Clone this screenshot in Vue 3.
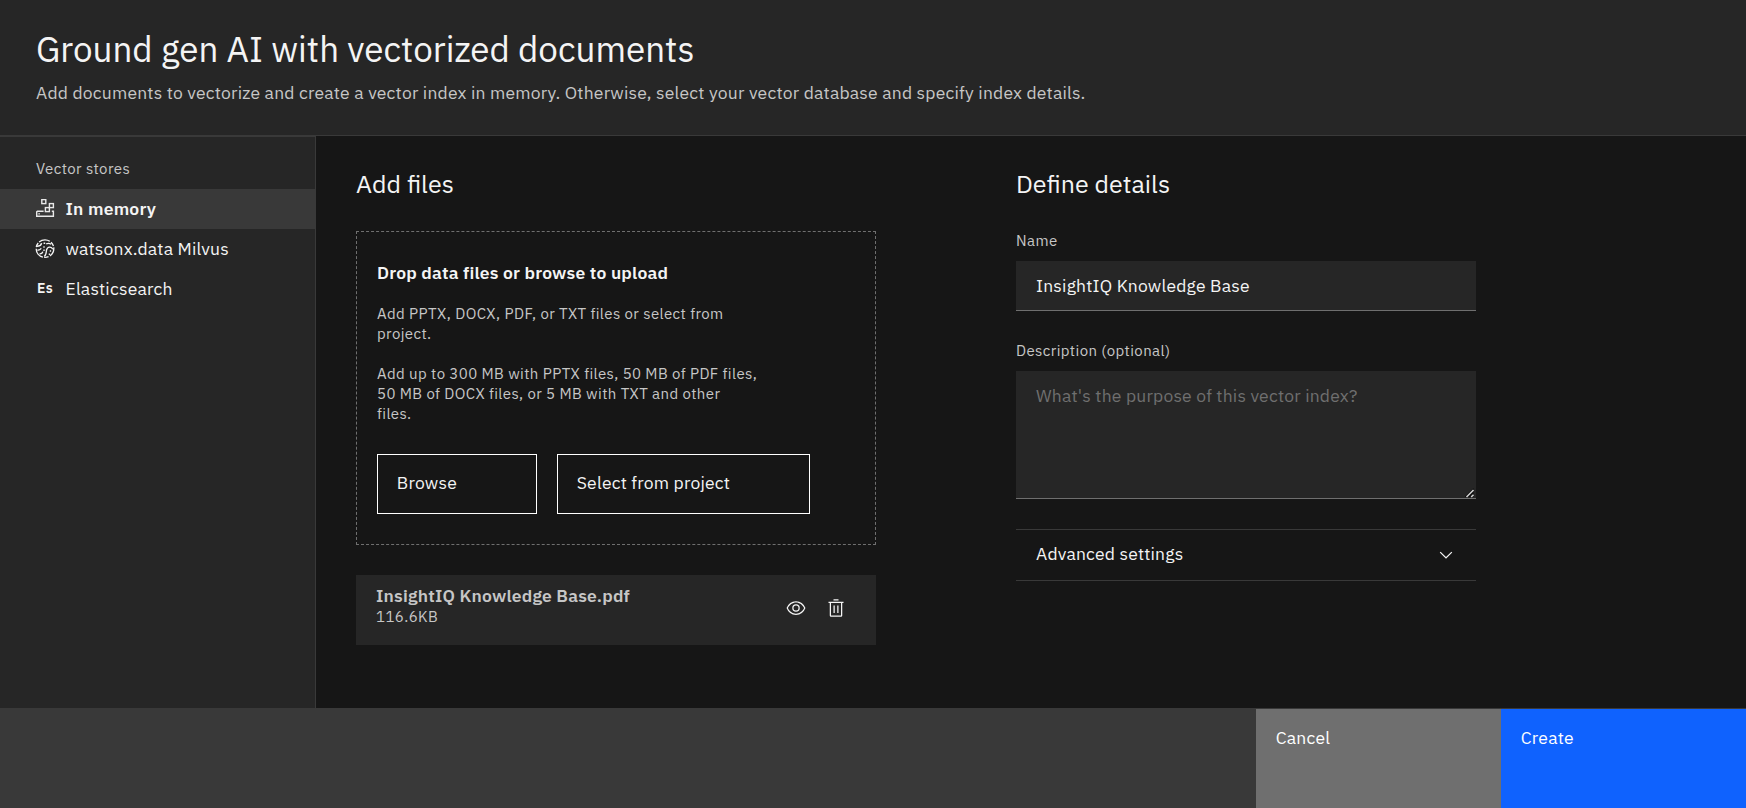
<script setup>
import { ref } from 'vue'

const stores = [
  { id: 'memory', label: 'In memory' },
  { id: 'milvus', label: 'watsonx.data Milvus' },
  { id: 'elastic', label: 'Elasticsearch' },
]
const selected = ref('memory')
const name = ref('InsightIQ Knowledge Base')
const description = ref('')
</script>

<template>
  <div class="page">
    <header class="header">
      <h1>Ground gen AI with vectorized documents</h1>
      <p>Add documents to vectorize and create a vector index in memory. Otherwise, select your vector database and specify index details.</p>
    </header>

    <div class="body">
      <nav class="sidebar">
        <div class="side-label">Vector stores</div>
        <div
          v-for="s in stores"
          :key="s.id"
          class="store"
          :class="{ active: selected === s.id }"
          @click="selected = s.id"
        >
          <svg v-if="s.id === 'memory'" class="icon" viewBox="0 0 20 20" fill="none" stroke="#e8e8e8" stroke-width="1.4">
            <rect x="6.8" y="0.6" width="4" height="4" />
            <rect x="14.4" y="4.6" width="4" height="4" />
            <rect x="10.4" y="8.6" width="4" height="4" />
            <path d="M8.6 12.2H2.4L1.7 12.9V17.3H18.4V12.2H16.8" />
            <rect x="3.4" y="14.1" width="1.4" height="1.4" fill="#e8e8e8" stroke="none" />
          </svg>
          <svg v-else-if="s.id === 'milvus'" class="icon" viewBox="0 0 20 20" fill="none" stroke="#f4f4f4" stroke-width="1.35">
            <circle cx="10" cy="9.6" r="8.8" stroke-dasharray="11.5 1.6 4.5 1.3" stroke-dashoffset="3" />
            <path d="M2 7.2C4.4 7.4 6.2 6.6 6.6 4.2" />
            <path d="M2.4 11.2C4 11.2 5.4 10.6 6.3 9.4" />
            <path d="M8.6 4.2h1.6M9 7.2v1.6M9 10.5v1.6" />
            <path d="M4.4 14.8C6.2 15 7.4 14.2 7.8 12.6" />
            <path d="M11.2 4.8C12.8 4.2 14.8 4.4 16.2 5.2" />
            <path d="M9.2 17.4C11.8 15.6 11 13 11.6 10.8 12.4 7.5 16.6 7.2 17.8 10.2" />
            <path d="M14.4 16V14.4M14.9 12.4 16 11.4" />
          </svg>
          <span v-else class="icon es">Es</span>
          <span class="store-name">{{ s.label }}</span>
        </div>
      </nav>

      <main class="main">
        <section class="files">
          <h2>Add files</h2>
          <div class="drop">
            <h3>Drop data files or browse to upload</h3>
            <p class="hint">Add PPTX, DOCX, PDF, or TXT files or select from<br />project.</p>
            <p class="hint">Add up to 300 MB with PPTX files, 50 MB of PDF files,<br />50 MB of DOCX files, or 5 MB with TXT and other<br />files.</p>
            <div class="buttons">
              <button class="outline browse">Browse</button>
              <button class="outline select">Select from project</button>
            </div>
          </div>
          <div class="file">
            <div class="file-text">
              <div class="file-name">InsightIQ Knowledge Base.pdf</div>
              <div class="file-size">116.6KB</div>
            </div>
            <div class="actions">
              <svg class="icon" viewBox="0 0 32 32" fill="#f4f4f4">
                <path d="M30.94,15.66A16.69,16.69,0,0,0,16,5,16.69,16.69,0,0,0,1.06,15.66a1,1,0,0,0,0,.68A16.69,16.69,0,0,0,16,27,16.69,16.69,0,0,0,30.94,16.34,1,1,0,0,0,30.94,15.66ZM16,25c-5.3,0-10.9-3.93-12.93-9C5.1,10.93,10.7,7,16,7s10.9,3.93,12.93,9C26.9,21.07,21.3,25,16,25Z" />
                <path d="M16,10a6,6,0,1,0,6,6A6,6,0,0,0,16,10Zm0,10a4,4,0,1,1,4-4A4,4,0,0,1,16,20Z" />
              </svg>
              <svg class="icon" viewBox="0 0 32 32" fill="#f4f4f4">
                <path d="M12 12H14V24H12zM18 12H20V24H18z" />
                <path d="M4 6V8H6V28a2 2 0 002 2H24a2 2 0 002-2V8h2V6zM8 28V8H24V28z" />
                <path d="M12 2H20V4H12z" />
              </svg>
            </div>
          </div>
        </section>

        <section class="details">
          <h2>Define details</h2>
          <label for="name">Name</label>
          <input id="name" v-model="name" type="text" />
          <label for="desc">Description (optional)</label>
          <div class="area">
            <textarea id="desc" v-model="description" placeholder="What's the purpose of this vector index?"></textarea>
            <svg class="grip" viewBox="0 0 10 10">
              <path d="M0 8.5 8.5 0V9H0z" fill="#0b0b0b" />
              <path d="M1.5 9 8.5 2M6.2 9 8.5 6.7" stroke="#d0d0d0" stroke-width="1.6" fill="none" />
            </svg>
          </div>
          <div class="accordion">
            <span>Advanced settings</span>
            <svg class="icon" viewBox="0 0 16 16" fill="#f4f4f4">
              <path d="M8 11L3 6 3.7 5.3 8 9.6 12.3 5.3 13 6z" />
            </svg>
          </div>
        </section>
      </main>
    </div>

    <footer class="footer">
      <button class="cancel">Cancel</button>
      <button class="create">Create</button>
    </footer>
  </div>
</template>

<style>
body {
  background: #161616;
}
</style>

<style scoped>
.page {
  height: 808px;
  display: flex;
  flex-direction: column;
  overflow: hidden;
  background: #161616;
  color: #f4f4f4;
  font-family: "IBM Plex Sans", Roboto, "Liberation Sans", sans-serif;
  font-size: 17.5px;
  line-height: 24px;
  letter-spacing: 0.2px;
}
.page * {
  box-sizing: border-box;
}
h1, h2, h3, p {
  margin: 0;
  font-weight: 400;
  white-space: nowrap;
}
button, input, textarea {
  font: inherit;
  color: inherit;
  letter-spacing: inherit;
  border-radius: 0;
  outline: none;
}
.icon {
  display: block;
  flex: none;
  width: 20px;
  height: 20px;
}

.header {
  height: 136px;
  padding: 27px 36px 0;
  background: #262626;
  border-bottom: 1px solid #393939;
}
.header h1 {
  font-size: 35px;
  line-height: 44px;
  letter-spacing: 0;
}
.header p {
  margin-top: 10px;
  color: #c6c6c6;
}

.body {
  flex: 1;
  display: flex;
  min-height: 0;
}
.sidebar {
  width: 316px;
  padding-top: 22px;
  background: #262626;
  border-top: 1px solid #393939;
  border-right: 1px solid #393939;
}
.side-label {
  margin-bottom: 10px;
  padding-left: 36px;
  color: #c6c6c6;
  font-size: 15px;
  line-height: 20px;
  letter-spacing: 0.4px;
}
.store {
  display: flex;
  align-items: center;
  gap: 10px;
  height: 40px;
  padding-left: 35px;
}
.store.active {
  background: #393939;
}
.store-name {
  padding-left: 0.5px;
}
.active .store-name {
  font-weight: 600;
}
.es {
  font-size: 14px;
  font-weight: 600;
  line-height: 19px;
  text-align: center;
}

.main {
  flex: 1;
  display: flex;
  gap: 140px;
  padding: 32px 0 0 40px;
}
h2 {
  margin-bottom: 31px;
  font-size: 25px;
  line-height: 32px;
  letter-spacing: 0;
}
.files {
  width: 520px;
}
.drop {
  height: 314px;
  padding: 29px 20px 0;
  border: 1px dashed #6f6f6f;
}
.drop h3 {
  margin-bottom: 19px;
  font-size: 17.5px;
  font-weight: 600;
}
.hint {
  margin-bottom: 20px;
  color: #c6c6c6;
  font-size: 15px;
  line-height: 20px;
  letter-spacing: 0.39px;
}
.buttons {
  display: flex;
  gap: 20px;
  margin-top: 30px;
}
.outline {
  height: 60px;
  padding: 0 18.75px 3px;
  background: transparent;
  border: 1px solid #fff;
  text-align: left;
}
.browse {
  width: 160px;
}
.select {
  width: 253px;
}
.file {
  display: flex;
  justify-content: space-between;
  height: 70px;
  margin-top: 30px;
  padding: 10px 30px 0 20px;
  background: #262626;
  color: #c6c6c6;
}
.file-name {
  font-weight: 600;
  line-height: 22px;
}
.file-size {
  font-size: 15px;
  line-height: 20px;
  letter-spacing: 0.4px;
}
.actions {
  display: flex;
  gap: 20px;
  padding-top: 13px;
}

.details {
  width: 460px;
}
label {
  display: block;
  margin-bottom: 10px;
  color: #c6c6c6;
  font-size: 15px;
  line-height: 20px;
  letter-spacing: 0.4px;
}
input {
  display: block;
  width: 100%;
  height: 50px;
  margin-bottom: 30px;
  padding: 0 20px;
  background: #262626;
  border: 0;
  border-bottom: 1px solid #6f6f6f;
}
.area {
  position: relative;
  height: 128px;
}
textarea {
  display: block;
  width: 100%;
  height: 128px;
  padding: 13px 20px;
  background: #262626;
  border: 0;
  border-bottom: 1px solid #6f6f6f;
  resize: none;
}
textarea::placeholder {
  color: #6f6f6f;
  opacity: 1;
}
.grip {
  position: absolute;
  right: 1px;
  bottom: 1px;
  width: 10px;
  height: 10px;
}
.accordion {
  display: flex;
  justify-content: space-between;
  height: 52px;
  margin-top: 30px;
  padding: 12px 20px 0;
  border-top: 1px solid #393939;
  border-bottom: 1px solid #393939;
}
.accordion .icon {
  margin-top: 3px;
}

.footer {
  display: flex;
  justify-content: flex-end;
  height: 100px;
  padding-top: 1px;
  background: #393939;
}
.footer button {
  display: flex;
  align-items: flex-start;
  width: 245px;
  padding: 17px 19.75px 0;
  border: 0;
  color: #fff;
}
.cancel {
  background: #6f6f6f;
}
.create {
  background: #0f62fe;
}
</style>
